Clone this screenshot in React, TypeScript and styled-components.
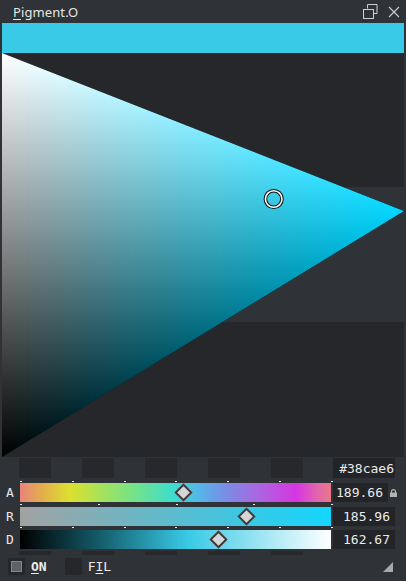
import React from "react";
import styled, { createGlobalStyle } from "styled-components";

const Global = createGlobalStyle`
  html, body { margin: 0; padding: 0; background: #2f3236; }
  #root { width: 406px; height: 581px; }
`;

const HUE = "#00d6ff";
const COLOR = "#38cae6";

const Window = styled.div`
  width: 406px;
  height: 581px;
  background: #2f3236;
  display: flex;
  flex-direction: column;
  overflow: hidden;
  font-family: "DejaVu Sans Mono", monospace;
  color: #e8e8e8;
`;

const TitleBar = styled.div`
  height: 23px;
  display: flex;
  align-items: center;
  padding: 0 6px 0 13px;
`;

const Title = styled.div`
  flex: 1;
  font-family: "Noto Sans", "Open Sans", sans-serif;
  font-size: 13px;
  color: #e6e6e6;
  letter-spacing: 0.1px;
  u { text-decoration-thickness: 1px; text-underline-offset: 2px; }
`;

const TitleButtons = styled.div`
  display: flex;
  gap: 10px;
  align-items: center;
`;

const Swatch = styled.div<{ $c: string }>`
  margin: 0 2px;
  height: 30px;
  background: ${(p) => p.$c};
`;

const Canvas = styled.div`
  margin: 0 2px;
  height: 404px;
  position: relative;
  background: linear-gradient(
    to bottom,
    #25272b 0px,
    #25272b 134px,
    #2f3236 134px,
    #2f3236 269px,
    #25272b 269px
  );
`;

const CanvasSvg = styled.svg`
  display: block;
  position: absolute;
  left: 0;
  top: 0;
`;

const Channels = styled.div`
  display: flex;
  flex-direction: column;
  padding-top: 1px;
`;

const Row = styled.div<{ $h: number }>`
  display: flex;
  align-items: stretch;
  height: ${(p) => p.$h}px;
`;

const Label = styled.div`
  width: 20px;
  display: flex;
  align-items: center;
  justify-content: center;
  font-size: 13px;
  color: #e8e8e8;
`;

const BoxGroup = styled.div<{ $h: number; $top: number }>`
  width: 311px;
  margin-left: -1px;
  margin-right: 3px;
  display: flex;
  gap: 31px;
  padding-top: ${(p) => p.$top}px;
  div { width: 32px; height: ${(p) => p.$h}px; background: #26282c; }
`;

const Field = styled.div<{ $w: number; $pad?: number }>`
  width: ${(p) => p.$w}px;
  background: #222428;
  display: flex;
  align-items: center;
  justify-content: flex-end;
  padding-right: ${(p) => (p.$pad ?? 5)}px;
  box-sizing: border-box;
  font-size: 13px;
  color: #eaeaea;
`;

const TickRow = styled.div<{ $h: number; $off: number }>`
  height: ${(p) => p.$h}px;
  padding-left: 20px;
  width: 313px;
  box-sizing: content-box;
  display: flex;
  justify-content: space-between;
  align-items: flex-start;
  span {
    width: 2px;
    height: 1px;
    margin-top: ${(p) => p.$off}px;
    background: #e6e6e6;
  }
`;

const Track = styled.div<{ $bg: string }>`
  position: relative;
  width: 311px;
  margin-right: 2px;
  background: ${(p) => p.$bg};
`;

const Handle = styled.div`
  position: absolute;
  top: 50%;
  width: 9px;
  height: 9px;
  margin-left: -6.5px;
  margin-top: -6.5px;
  background: #d6d6d6;
  border: 2px solid #3a3b3d;
  transform: rotate(45deg);
`;

const LockSlot = styled.div`
  width: 10px;
  display: flex;
  align-items: center;
  justify-content: center;
`;

const Footer = styled.div`
  display: flex;
  align-items: center;
  height: 17px;
  margin-top: 2px;
  padding: 0 13px 0 8px;
`;

const Check = styled.div<{ $on?: boolean }>`
  width: 17px;
  height: 17px;
  background: #25272b;
  display: flex;
  align-items: center;
  justify-content: center;
  &::after {
    content: "";
    display: ${(p) => (p.$on ? "block" : "none")};
    width: 9px;
    height: 9px;
    background: #5e6166;
    border: 1px solid #83868b;
  }
`;

const CheckText = styled.div<{ $bold?: boolean; $gap: number }>`
  margin-left: 6px;
  margin-right: ${(p) => p.$gap}px;
  font-size: 13px;
  font-weight: ${(p) => (p.$bold ? 700 : 400)};
  color: #ececec;
  u { text-underline-offset: 2px; text-decoration-thickness: 1px; }
`;

const Spacer = styled.div`
  flex: 1;
`;

const ticks = (n: number) =>
  Array.from({ length: n }, (_, i) => <span key={i} />);

const boxes = () => Array.from({ length: 5 }, (_, i) => <div key={i} />);

const HUE_GRAD =
  "linear-gradient(to right, #e8857a 0%, #e2b348 8%, #dde030 16%, #a6e25a 26%, #6ee290 38%, #3adcd4 50%, #56b4e8 58%, #788ee6 66%, #a868e2 76%, #d636e0 89%, #e268a8 96%, #e87888 100%)";
const RAT_GRAD = "linear-gradient(to right, #a2a2a2 0%, #14d6fd 100%)";
const DIS_GRAD =
  "linear-gradient(to right, #000000 0%, #145a68 25%, #38cae6 54%, #ffffff 100%)";

const channels = [
  { l: "A", v: "189.66", pos: 189.66 / 360, bg: HUE_GRAD, w: 55, lock: true },
  { l: "R", v: "185.96", pos: 185.96 / 255, bg: RAT_GRAD, w: 62 },
  { l: "D", v: "162.67", pos: 162.67 / 255, bg: DIS_GRAD, w: 62 },
];

const tickSpec = [
  { h: 5, off: 3, n: 7 },
  { h: 5, off: 2, n: 5 },
  { h: 4, off: 1, n: 7 },
];

const TriangleView = () => {
  const pts = "0,0 0,404 402,158";
  return (
    <CanvasSvg width={402} height={404} viewBox="0 0 402 404">
      <defs>
        <linearGradient
          id="wgrad"
          gradientUnits="userSpaceOnUse"
          x1="0"
          y1="0"
          x2="179.87"
          y2="293.93"
        >
          <stop offset="0" stopColor="#ffffff" stopOpacity="1" />
          <stop offset="1" stopColor="#ffffff" stopOpacity="0" />
        </linearGradient>
        <linearGradient
          id="hgrad"
          gradientUnits="userSpaceOnUse"
          x1="0"
          y1="0"
          x2="402"
          y2="0"
        >
          <stop offset="0" stopColor={HUE} stopOpacity="0" />
          <stop offset="1" stopColor={HUE} stopOpacity="1" />
        </linearGradient>
      </defs>
      <g style={{ isolation: "isolate" }}>
        <polygon points={pts} fill="#000" />
        <polygon points={pts} fill="url(#wgrad)" style={{ mixBlendMode: "plus-lighter" }} />
        <polygon points={pts} fill="url(#hgrad)" style={{ mixBlendMode: "plus-lighter" }} />
      </g>
      <circle cx="271.7" cy="146" r="8.3" fill="none" stroke="#111" strokeWidth="3.6" />
      <circle cx="271.7" cy="146" r="8.3" fill="none" stroke="#ffffff" strokeWidth="1.6" />
    </CanvasSvg>
  );
};

export default function App() {
  return (
    <>
      <Global />
      <Window>
        <TitleBar>
          <Title>
            <u>P</u>igment.O
          </Title>
          <TitleButtons>
            <svg width="15" height="15" viewBox="0 0 15 15">
              <path d="M4.5 0.5h9.5v9h-3" fill="none" stroke="#cfcfcf" strokeWidth="1" />
              <path d="M4.5 4.5v-4" fill="none" stroke="#cfcfcf" strokeWidth="1" />
              <rect x="0.5" y="5.5" width="10" height="9" fill="none" stroke="#cfcfcf" strokeWidth="1" />
            </svg>
            <svg width="12" height="12" viewBox="0 0 12 12">
              <path d="M1 1L11 11M11 1L1 11" stroke="#cfcfcf" strokeWidth="1.1" />
            </svg>
          </TitleButtons>
        </TitleBar>
        <Swatch $c={COLOR} />
        <Canvas>
          <TriangleView />
        </Canvas>
        <Channels>
          <Row $h={20}>
            <Label />
            <BoxGroup $h={20} $top={0}>{boxes()}</BoxGroup>
            <Field $w={62} $pad={1}>#38cae6</Field>
          </Row>
          {channels.map((c, i) => (
            <React.Fragment key={c.l}>
              <TickRow $h={tickSpec[i].h} $off={tickSpec[i].off}>
                {ticks(tickSpec[i].n)}
              </TickRow>
              <Row $h={19}>
                <Label>{c.l}</Label>
                <Track $bg={c.bg}>
                  <Handle style={{ left: `${c.pos * 100}%` }} />
                </Track>
                <Field $w={c.w}>{c.v}</Field>
                {c.lock && (
                  <LockSlot>
                    <svg width="7" height="8" viewBox="0 0 7 8">
                      <path d="M1.5 4V2.6a2 2 0 0 1 4 0V4" fill="none" stroke="#b4b4b4" strokeWidth="1.2" />
                      <rect x="0" y="3.6" width="7" height="4.4" fill="#b4b4b4" />
                    </svg>
                  </LockSlot>
                )}
              </Row>
            </React.Fragment>
          ))}
          <Row $h={7}>
            <Label />
            <BoxGroup $h={4} $top={2}>{boxes()}</BoxGroup>
          </Row>
        </Channels>
        <Footer>
          <Check $on />
          <CheckText $bold $gap={18}>
            <u>O</u>N
          </CheckText>
          <Check />
          <CheckText $gap={0}>
            F<u>I</u>L
          </CheckText>
          <Spacer />
          <svg width="10" height="10" viewBox="0 0 10 10">
            <polygon points="10,0 10,10 0,10" fill="#a8a8a8" />
          </svg>
        </Footer>
      </Window>
    </>
  );
}
